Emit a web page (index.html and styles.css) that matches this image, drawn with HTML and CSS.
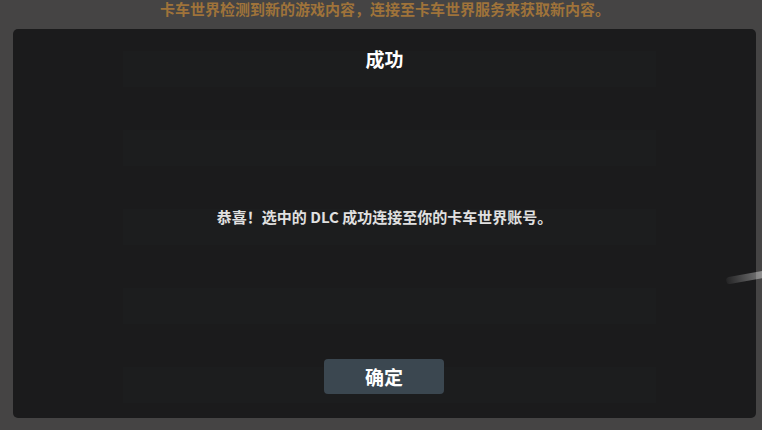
FILE: index.html
```html
<!DOCTYPE html>
<html lang="zh-CN">
<head>
  <meta charset="UTF-8">
  <title>成功</title>
  <link rel="stylesheet" href="styles.css">
</head>
<body>
  <div class="notice">卡车世界检测到新的游戏内容，连接至卡车世界服务来获取新内容。</div>

  <!-- success dialog -->
  <div class="dialog">
    <div class="rows"></div>
    <div class="dialog-title">成功</div>
    <div class="dialog-body">
      <p class="message">恭喜！选中的 DLC 成功连接至你的卡车世界账号。</p>
    </div>
    <div class="dialog-footer">
      <button class="ok-btn">确定</button>
    </div>
  </div>

  <div class="streak"></div>
</body>
</html>
```

FILE: styles.css
```css
body {
  margin: 0;
  width: 762px;
  height: 430px;
  overflow: hidden;
  background-color: #454444;
  font-family: "Noto Sans CJK SC", "Noto Sans", sans-serif;
  position: relative;
}

.notice {
  height: 29px;
  line-height: 17px;
  text-align: center;
  padding-left: 8px;
  font-size: 15px;
  font-weight: bold;
  color: #9f733a;
}

.dialog {
  margin: 0 6px 0 13px;
  height: 389px;
  background-color: #1b1b1c;
  border-radius: 5px;
  display: flex;
  flex-direction: column;
  position: relative;
}

/* list rows of the screen behind, seen through the dialog */
.rows {
  position: absolute;
  left: 110px;
  right: 100px;
  top: 22px;
  bottom: 0;
  background: repeating-linear-gradient(to bottom, #1c1d1e 0, #1c1d1e 36px, transparent 36px, transparent 79px);
}

.dialog-title {
  position: relative;
  padding-top: 16px;
  line-height: 28px;
  text-align: center;
  font-size: 19px;
  font-weight: bold;
  color: #ffffff;
}

.dialog-body {
  flex: 1;
  display: flex;
  justify-content: center;
  align-items: center;
  position: relative;
}

.message {
  margin: 0;
  font-size: 15px;
  font-weight: bold;
  color: #e0e0e0;
}

.dialog-footer {
  display: flex;
  justify-content: center;
  padding: 0 0 24px 0;
  position: relative;
}

.ok-btn {
  width: 120px;
  height: 35px;
  margin-left: -1px;
  border: none;
  border-radius: 4px;
  background-color: #3b4750;
  color: #ffffff;
  font-family: inherit;
  font-size: 19px;
  font-weight: bold;
}

.streak {
  position: absolute;
  left: 726px;
  top: 274px;
  width: 40px;
  height: 7px;
  background: linear-gradient(to right, rgba(255,255,255,0.04), rgba(255,255,255,0.45));
  transform: rotate(-10deg);
  border-radius: 3px;
}
```
